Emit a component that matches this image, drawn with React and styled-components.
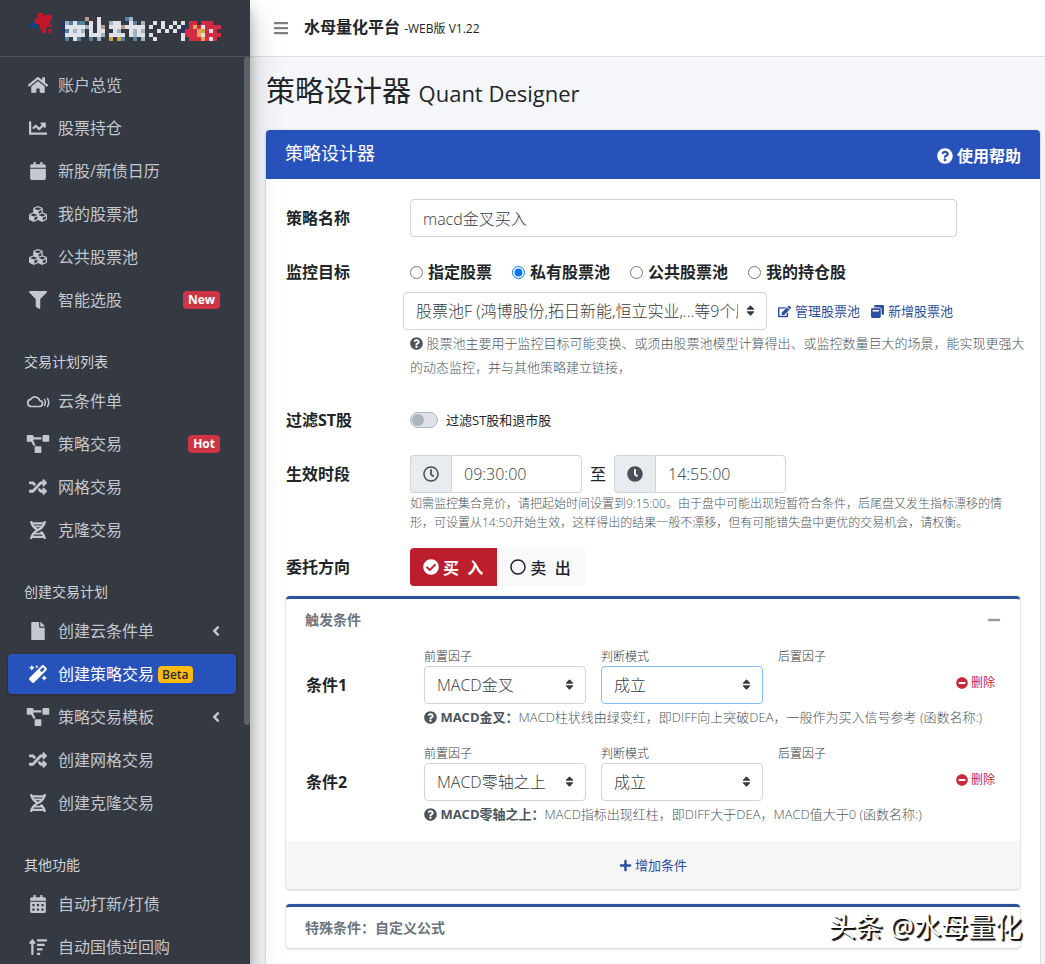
import { useState } from "react";
import styled, { createGlobalStyle, css } from "styled-components";
import {
    FaHome,
    FaChartLine,
    FaCalendar,
    FaCalendarAlt,
    FaCubes,
    FaFilter,
    FaProjectDiagram,
    FaRandom,
    FaDna,
    FaFile,
    FaMagic,
    FaSortAmountUp,
    FaAngleLeft,
    FaBars,
    FaQuestionCircle,
    FaEdit,
    FaWindowRestore,
    FaRegClock,
    FaClock,
    FaCheckCircle,
    FaRegCircle,
    FaMinus,
    FaMinusCircle,
    FaPlus,
    FaSort,
} from "react-icons/fa";

const GlobalStyle = createGlobalStyle`
    *, *::before, *::after {
        box-sizing: border-box;
    }
    body {
        margin: 0;
        font-family: "Open Sans", "Noto Sans CJK SC", sans-serif;
        font-size: 16px;
        line-height: 24px;
        color: #212529;
        background-color: #f4f6f9;
    }
    input, select, button {
        font-family: inherit;
    }
    a {
        color: #2b4f9e;
        text-decoration: none;
    }
    svg {
        flex-shrink: 0;
    }
`;

const CloudSignal = () => (
    <svg viewBox="0 -2 24 18" fill="none" stroke="currentColor" strokeWidth="1.700" strokeLinecap="round">
        <path d="M5 12.500h8.200a3 3 0 0 0 .5-6A5 5 0 0 0 4.600 5.400 3.600 3.600 0 0 0 5 12.500z" />
        <path d="M18.500 5.500c1 1.800 1 4.200 0 6M21.500 4.500c1.500 2.400 1.500 5.600 0 8" strokeWidth="1.500" />
    </svg>
);

const pixelColors = {
    w: "#dfe3e8",
    s: "#a3b3c2",
    b: "#54809f",
    n: "#2b3268",
    t: "#b89c86",
    r: "#d12c42",
    o: "#f0a35a",
    y: "#c9a545",
};

const pixelRows = [
    "......t..w......bs......................",
    "nsbwbb.w.w..sww..wb.s..w.w..w.w.rr.rrr..",
    "nwwwwwsw.wt.wwwtwwwww.w..w.w.wn.rorwrrrr",
    "nbwsws.w.ww..ws..wsws...w.w.w.nrrroyrwr.",
    "nwwwww.wwws.wwww.wsww.w.......wrrrowrrrr",
    ".b.wb..b.s..y.yb..b.s..w......w.rrrorwr.",
];

const Logo = () => (
    <svg width="200" height="36" viewBox="0 0 200 36" role="img" aria-label="logo">
        <path d="M2 16l6-4 4 2 1 6-5-2z" fill="#123f80" />
        <path d="M10 8h3V3h5v3l3-1h6v5h-2v5h2v2h-6v6h-4v-4h-2l-1-5h-4z" fill="#c4152a" />
        <path d="M23 19h4v4h-4z" fill="#a81a2c" />
        {pixelRows.map((row, y) =>
            row.split("").map((cell, x) =>
                cell === "." ? null : (
                    <rect key={x + "-" + y} x={36 + x * 4} y={7 + y * 4} width="4" height="4" fill={pixelColors[cell]} />
                )
            )
        )}
    </svg>
);

const menu = [
    {
        items: [
            { icon: <FaHome />, text: "账户总览" },
            { icon: <FaChartLine />, text: "股票持仓" },
            { icon: <FaCalendar />, text: "新股/新债日历" },
            { icon: <FaCubes />, text: "我的股票池" },
            { icon: <FaCubes />, text: "公共股票池" },
            { icon: <FaFilter />, text: "智能选股", badge: "New" },
        ],
    },
    {
        title: "交易计划列表",
        items: [
            { icon: <CloudSignal />, text: "云条件单" },
            { icon: <FaProjectDiagram />, text: "策略交易", badge: "Hot" },
            { icon: <FaRandom />, text: "网格交易" },
            { icon: <FaDna />, text: "克隆交易" },
        ],
    },
    {
        title: "创建交易计划",
        items: [
            { icon: <FaFile />, text: "创建云条件单", tree: true },
            { icon: <FaMagic />, text: "创建策略交易", beta: true, active: true },
            { icon: <FaProjectDiagram />, text: "策略交易模板", tree: true },
            { icon: <FaRandom />, text: "创建网格交易" },
            { icon: <FaDna />, text: "创建克隆交易" },
        ],
    },
    {
        title: "其他功能",
        items: [
            { icon: <FaCalendarAlt />, text: "自动打新/打债" },
            { icon: <FaSortAmountUp />, text: "自动国债逆回购" },
        ],
    },
];

const targets = ["指定股票", "私有股票池", "公共股票池", "我的持仓股"];

const conditions = [
    {
        id: 1,
        factor: "MACD金叉",
        mode: "成立",
        help: "MACD柱状线由绿变红，即DIFF向上突破DEA，一般作为买入信号参考 (函数名称:)",
        focused: true,
    },
    {
        id: 2,
        factor: "MACD零轴之上",
        mode: "成立",
        help: "MACD指标出现红柱，即DIFF大于DEA，MACD值大于0 (函数名称:)",
    },
];

const SelectBox = ({ id, value, focused, label }) => (
    <SelectWrap>
        <Select id={id} aria-label={label} $focused={focused} defaultValue={value}>
            <option>{value}</option>
        </Select>
        <FaSort />
    </SelectWrap>
);

const Sidebar = () => (
    <Aside>
        <Brand href="#">
            <Logo />
        </Brand>
        <SidebarBody>
            <Nav>
                {menu.map((group, i) => (
                    <NavGroup key={i}>
                        {group.title && <NavHeader>{group.title}</NavHeader>}
                        {group.items.map((item) => (
                            <NavItem key={item.text} href="#" $active={item.active}>
                                <NavIcon>{item.icon}</NavIcon>
                                <span>{item.text}</span>
                                {item.beta && <Beta>Beta</Beta>}
                                {item.badge && <Badge>{item.badge}</Badge>}
                                {item.tree && <Arrow><FaAngleLeft /></Arrow>}
                            </NavItem>
                        ))}
                    </NavGroup>
                ))}
            </Nav>
            <Scrollbar />
        </SidebarBody>
    </Aside>
);

const Condition = ({ data }) => (
    <ConditionRow>
        <ConditionName>条件{data.id}</ConditionName>
        <ConditionMain>
            <Fields>
                <Field>
                    <FieldLabel htmlFor={"factor" + data.id}>前置因子</FieldLabel>
                    <SelectBox id={"factor" + data.id} value={data.factor} />
                </Field>
                <Field>
                    <FieldLabel htmlFor={"mode" + data.id}>判断模式</FieldLabel>
                    <SelectBox id={"mode" + data.id} value={data.mode} focused={data.focused} />
                </Field>
                <Field>
                    <FieldLabel as="span">后置因子</FieldLabel>
                </Field>
                <DeleteLink href="#">
                    <FaMinusCircle /> 删除
                </DeleteLink>
            </Fields>
            <ConditionHelp>
                <FaQuestionCircle /> <b>{data.factor}：</b>
                {data.help}
            </ConditionHelp>
        </ConditionMain>
    </ConditionRow>
);

const App = () => {
    const [target, setTarget] = useState("私有股票池");
    const [side, setSide] = useState("buy");

    return (
        <Shell>
            <GlobalStyle />
            <Sidebar />
            <Main>
                <Navbar>
                    <MenuButton aria-label="菜单"><FaBars /></MenuButton>
                    <NavTitle>
                        水母量化平台 <small>-WEB版 V1.22</small>
                    </NavTitle>
                </Navbar>
                <Content>
                    <PageTitle>
                        策略设计器 <small>Quant Designer</small>
                    </PageTitle>
                    <Card>
                        <CardHeader>
                            <h2>策略设计器</h2>
                            <HelpLink href="#"><FaQuestionCircle /> 使用帮助</HelpLink>
                        </CardHeader>
                        <CardBody>
                            <Row>
                                <RowLabel htmlFor="name">策略名称</RowLabel>
                                <RowField>
                                    <NameInput id="name" type="text" defaultValue="macd金叉买入" />
                                </RowField>
                            </Row>
                            <Row>
                                <RowLabel as="span">监控目标</RowLabel>
                                <RowField>
                                    <Radios>
                                        {targets.map((t) => (
                                            <RadioLabel key={t}>
                                                <input type="radio" name="target" checked={target === t} onChange={() => setTarget(t)} />
                                                {t}
                                            </RadioLabel>
                                        ))}
                                    </Radios>
                                    <PoolRow>
                                        <PoolSelect>
                                            <SelectBox label="股票池" value="股票池F (鸿博股份,拓日新能,恒立实业,...等9个股票)" />
                                        </PoolSelect>
                                        <PoolLink href="#"><FaEdit /> 管理股票池</PoolLink>
                                        <PoolLink href="#"><FaWindowRestore /> 新增股票池</PoolLink>
                                    </PoolRow>
                                    <PoolHelp>
                                        <FaQuestionCircle /> 股票池主要用于监控目标可能变换、或须由股票池模型计算得出、或监控数量巨大的场景，能实现更强大的动态监控，并与其他策略建立链接，
                                    </PoolHelp>
                                </RowField>
                            </Row>
                            <Row>
                                <RowLabel htmlFor="filter">过滤ST股</RowLabel>
                                <RowField>
                                    <SwitchLabel>
                                        <Switch id="filter" type="checkbox" role="switch" />
                                        过滤ST股和退市股
                                    </SwitchLabel>
                                </RowField>
                            </Row>
                            <Row>
                                <RowLabel htmlFor="start">生效时段</RowLabel>
                                <RowField>
                                    <Times>
                                        <TimeGroup>
                                            <Addon><FaRegClock /></Addon>
                                            <TimeInput id="start" type="text" defaultValue="09:30:00" />
                                        </TimeGroup>
                                        <span>至</span>
                                        <TimeGroup>
                                            <Addon><FaClock /></Addon>
                                            <TimeInput aria-label="结束时间" type="text" defaultValue="14:55:00" />
                                        </TimeGroup>
                                    </Times>
                                    <TimeHelp>
                                        如需监控集合竞价，请把起始时间设置到9:15:00。由于盘中可能出现短暂符合条件，后尾盘又发生指标漂移的情形，可设置从14:50开始生效，这样得出的结果一般不漂移，但有可能错失盘中更优的交易机会，请权衡。
                                    </TimeHelp>
                                </RowField>
                            </Row>
                            <Row>
                                <RowLabel as="span">委托方向</RowLabel>
                                <RowField>
                                    <Sides>
                                        <SideButton type="button" $on={side === "buy"} onClick={() => setSide("buy")}>
                                            {side === "buy" ? <FaCheckCircle /> : <FaRegCircle />}
                                            买&nbsp;&nbsp;入
                                        </SideButton>
                                        <SideButton type="button" $on={side === "sell"} onClick={() => setSide("sell")}>
                                            {side === "sell" ? <FaCheckCircle /> : <FaRegCircle />}
                                            卖&nbsp;&nbsp;出
                                        </SideButton>
                                    </Sides>
                                </RowField>
                            </Row>
                            <Panels>
                                <Panel>
                                    <PanelHeader>
                                        <h3>触发条件</h3>
                                        <CollapseButton aria-label="收起"><FaMinus /></CollapseButton>
                                    </PanelHeader>
                                    <PanelBody>
                                        {conditions.map((c) => (
                                            <Condition key={c.id} data={c} />
                                        ))}
                                    </PanelBody>
                                    <PanelFooter>
                                        <a href="#"><FaPlus /> 增加条件</a>
                                    </PanelFooter>
                                </Panel>
                                <Panel>
                                    <PanelHeader>
                                        <h3>特殊条件：自定义公式</h3>
                                    </PanelHeader>
                                </Panel>
                            </Panels>
                        </CardBody>
                    </Card>
                </Content>
            </Main>
            <Watermark>头条 @水母量化</Watermark>
        </Shell>
    );
};

const Shell = styled.div`
    position: relative;
    display: flex;
    height: 100vh;
    overflow: hidden;
`;

/* sidebar */
const Aside = styled.aside`
    display: flex;
    flex-direction: column;
    flex: 0 0 250px;
    min-width: 0;
    z-index: 2;
    color: #c2c7d0;
    background-color: #353941;
    box-shadow: 0 14px 28px rgba(0, 0, 0, 0.25), 0 10px 10px rgba(0, 0, 0, 0.22);
`;
const Brand = styled.a`
    display: flex;
    flex-shrink: 0;
    height: 57px;
    padding: 10px 25px;
    border-bottom: 1px solid #4b545c;
`;
const SidebarBody = styled.div`
    display: flex;
    flex: 1;
    min-height: 0;
`;
const Scrollbar = styled.div`
    width: 6px;
    height: 668px;
    border-radius: 3px;
    background-color: #58636a;
`;
const Nav = styled.nav`
    flex: 1;
    padding: 8px;
    overflow: hidden;
`;
const NavGroup = styled.div`
    display: flex;
    flex-direction: column;
`;
const NavHeader = styled.div`
    padding: 28px 16px 8px;
    font-size: 14px;
    line-height: 22px;
    color: #d0d4db;
`;
const NavItem = styled.a`
    display: flex;
    align-items: center;
    height: 40px;
    margin-bottom: 3px;
    padding: 0 16px;
    border-radius: 4px;
    color: ${(props) => (props.$active ? "#ffffff" : "#c2c7d0")};
    ${(props) =>
        props.$active &&
        css`
            background-color: #2852bb;
            box-shadow: 0 1px 3px rgba(0, 0, 0, 0.3);
        `}
`;
const NavIcon = styled.span`
    display: flex;
    justify-content: center;
    width: 28px;
    margin-right: 6px;
    > svg {
        width: 24px;
        height: 18px;
    }
`;
const Badge = styled.span`
    margin-left: auto;
    padding: 0 5px;
    border-radius: 4px;
    font-size: 12px;
    font-weight: 700;
    line-height: 18px;
    color: #ffffff;
    background-color: #cf3645;
`;
const Beta = styled.span`
    margin-left: 4px;
    padding: 0 4px;
    border-radius: 4px;
    font-size: 12px;
    font-weight: 600;
    line-height: 17px;
    color: #1f2d3d;
    background-color: #fdbb10;
`;
const Arrow = styled.span`
    display: flex;
    margin-left: auto;
    > svg {
        width: 8px;
        height: 18px;
    }
`;

/* page */
const Main = styled.div`
    display: flex;
    flex-direction: column;
    flex: 1;
    min-width: 0;
`;
const Navbar = styled.header`
    display: flex;
    align-items: center;
    flex-shrink: 0;
    height: 57px;
    padding: 0 23px;
    border-bottom: 1px solid #dee2e6;
    background-color: #ffffff;
`;
const MenuButton = styled.button`
    display: flex;
    margin-right: 15px;
    padding: 0;
    border: none;
    font-size: 16px;
    color: #7f7f7f;
    background: none;
`;
const NavTitle = styled.div`
    font-weight: 700;
    > small {
        font-size: 12px;
        font-weight: 400;
    }
`;
const Content = styled.main`
    display: flex;
    flex-direction: column;
    flex: 1;
    padding: 0 5px 0 16px;
`;
const PageTitle = styled.h1`
    margin: 15px 0 21px;
    font-size: 29px;
    font-weight: 400;
    line-height: 37px;
    > small {
        font-size: 22px;
        line-height: 24px;
    }
`;
const Card = styled.section`
    flex: 1;
    border-radius: 4px 4px 0 0;
    background-color: #ffffff;
    box-shadow: 0 0 1px rgba(0, 0, 0, 0.2), 0 1px 3px rgba(0, 0, 0, 0.2);
`;
const CardHeader = styled.div`
    display: flex;
    align-items: flex-start;
    justify-content: space-between;
    height: 49px;
    padding: 11px 19px 0;
    border-radius: 4px 4px 0 0;
    color: #ffffff;
    background-color: #2852bb;
    > h2 {
        margin: 0;
        font-size: 18px;
        font-weight: 400;
    }
`;
const HelpLink = styled.a`
    display: flex;
    align-items: center;
    gap: 4px;
    margin-top: 3px;
    font-weight: 700;
    color: #ffffff;
`;
const CardBody = styled.div`
    padding: 20px 20px 0;
`;
const Row = styled.div`
    display: flex;
    margin-bottom: 16px;
`;
const RowLabel = styled.label`
    flex: 0 0 124px;
    font-weight: 700;
    line-height: 38px;
`;
const RowField = styled.div`
    flex: 1;
    min-width: 0;
`;

/* form controls */
const control = css`
    width: 100%;
    height: 38px;
    padding: 0 12px;
    border: 1px solid #ced4da;
    border-radius: 4px;
    font-size: 16px;
    font-weight: 300;
    color: #343a40;
    background-color: #ffffff;
`;
const NameInput = styled.input`
    ${control}
    display: block;
    max-width: 547px;
`;
const SelectWrap = styled.div`
    position: relative;
    > svg {
        position: absolute;
        top: 12px;
        right: 10px;
        font-size: 13px;
        color: #343a40;
        pointer-events: none;
    }
`;
const Select = styled.select`
    ${control}
    display: block;
    padding-right: 28px;
    appearance: none;
    ${(props) =>
        props.$focused &&
        css`
            border-color: #80bdff;
        `}
`;
const Radios = styled.div`
    display: flex;
    align-items: center;
    gap: 20px;
    height: 38px;
`;
const RadioLabel = styled.label`
    display: flex;
    align-items: center;
    gap: 5px;
    font-weight: 700;
    > input {
        width: 13px;
        height: 13px;
        margin: 0;
    }
`;
const PoolRow = styled.div`
    display: flex;
    align-items: center;
    gap: 11px;
    margin: 1px 0 1px -7px;
`;
const PoolSelect = styled.div`
    flex: 0 1 364px;
    min-width: 0;
`;
const PoolLink = styled.a`
    display: flex;
    align-items: center;
    gap: 4px;
    font-size: 13px;
    white-space: nowrap;
`;
const PoolHelp = styled.p`
    margin: 0 -8px 6px 0;
    font-size: 13px;
    font-weight: 300;
    line-height: 24px;
    color: #4c555e;
    > svg {
        vertical-align: -2px;
    }
`;
const SwitchLabel = styled.label`
    display: flex;
    align-items: center;
    gap: 8px;
    height: 38px;
    font-size: 13px;
`;
const Switch = styled.input`
    appearance: none;
    display: flex;
    align-items: center;
    width: 28px;
    height: 16px;
    margin: 0;
    padding: 1px;
    border: 1px solid #adb5bd;
    border-radius: 8px;
    background-color: #dee2e6;
    &::before {
        content: "";
        width: 12px;
        height: 12px;
        border-radius: 6px;
        background-color: #adb5bd;
    }
    &:checked {
        justify-content: flex-end;
    }
`;
const Times = styled.div`
    display: flex;
    align-items: center;
    gap: 8px;
`;
const TimeGroup = styled.div`
    display: flex;
    width: 172px;
`;
const Addon = styled.span`
    display: flex;
    align-items: center;
    padding: 0 12px;
    border: 1px solid #ced4da;
    border-right: none;
    border-radius: 4px 0 0 4px;
    color: #495057;
    background-color: #e9ecef;
`;
const TimeInput = styled.input`
    ${control}
    flex: 1;
    min-width: 0;
    border-radius: 0 4px 4px 0;
`;
const TimeHelp = styled.p`
    margin: 0;
    padding-top: 1px;
    font-size: 12px;
    font-weight: 300;
    line-height: 19px;
    color: #4c555e;
`;
const Sides = styled.div`
    display: flex;
`;
const SideButton = styled.button`
    display: flex;
    align-items: center;
    gap: 4px;
    height: 38px;
    padding: 0 14px 0 13px;
    border: none;
    border-radius: 4px 0 0 4px;
    font-size: 16px;
    font-weight: ${(props) => (props.$on ? 700 : 500)};
    color: ${(props) => (props.$on ? "#ffffff" : "#212529")};
    background-color: ${(props) => (props.$on ? "#bd1e2e" : "#f8f9fa")};
    & + & {
        border-radius: 0 4px 4px 0;
    }
`;

/* condition panels */
const Panels = styled.div`
    display: flex;
    flex-direction: column;
    gap: 15px;
    margin-top: -6px;
`;
const Panel = styled.section`
    border-top: 3px solid #2f529b;
    border-radius: 4px;
    background-color: #ffffff;
    box-shadow: 0 0 1px rgba(0, 0, 0, 0.2), 0 1px 3px rgba(0, 0, 0, 0.2);
`;
const PanelHeader = styled.div`
    display: flex;
    align-items: center;
    justify-content: space-between;
    height: 41px;
    padding: 0 19px;
    > h3 {
        margin: 0;
        font-size: 14px;
        font-weight: 700;
        color: #6c757d;
    }
`;
const CollapseButton = styled.button`
    display: flex;
    padding: 0;
    border: none;
    font-size: 14px;
    color: #999c9f;
    background: none;
`;
const PanelBody = styled.div`
    display: flex;
    flex-direction: column;
    gap: 16px;
    padding: 8px 25px 15px 20px;
`;
const ConditionRow = styled.div`
    display: flex;
`;
const ConditionName = styled.div`
    flex: 0 0 118px;
    padding-top: 18px;
    font-weight: 700;
    line-height: 38px;
`;
const ConditionMain = styled.div`
    flex: 1;
    min-width: 0;
`;
const Fields = styled.div`
    display: flex;
    gap: 15px;
`;
const Field = styled.div`
    flex: 0 1 162px;
`;
const FieldLabel = styled.label`
    display: block;
    font-size: 12px;
    line-height: 18px;
    font-weight: 300;
    color: #343a40;
`;
const DeleteLink = styled.a`
    display: flex;
    align-items: center;
    align-self: center;
    gap: 3px;
    margin: 14px 0 0 auto;
    font-size: 12px;
    white-space: nowrap;
    color: #c82838;
`;
const ConditionHelp = styled.div`
    margin-top: 1px;
    font-size: 13px;
    font-weight: 300;
    white-space: nowrap;
    color: #4c555e;
    > svg {
        vertical-align: -2px;
    }
    > b {
        font-weight: 700;
    }
`;
const PanelFooter = styled.div`
    display: flex;
    align-items: center;
    justify-content: center;
    height: 48px;
    border-radius: 0 0 4px 4px;
    font-size: 13px;
    background-color: #f6f6f7;
    > a {
        display: flex;
        align-items: center;
        gap: 3px;
    }
`;
const Watermark = styled.div`
    position: absolute;
    right: 23px;
    bottom: 19px;
    z-index: 3;
    font-size: 27px;
    line-height: 36px;
    color: #ffffff;
    text-shadow: 1px 1px 0 #111111, 2px 2px 1px #111111;
`;

export default App;
